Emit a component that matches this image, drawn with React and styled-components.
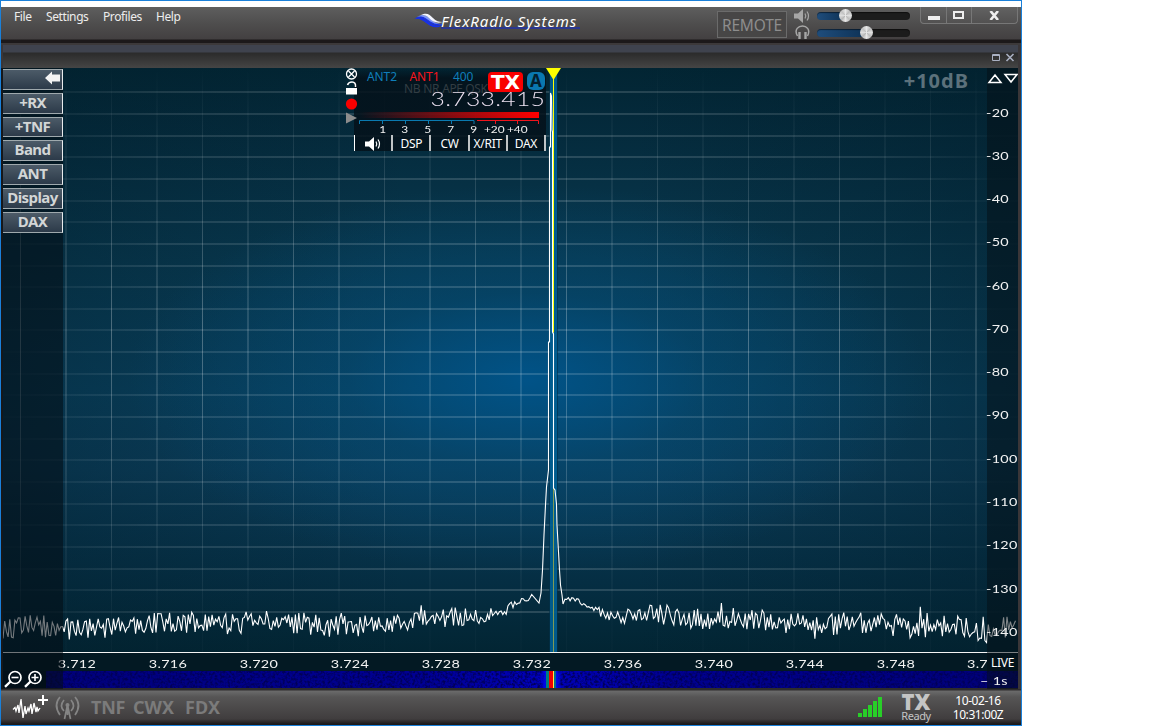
import styled, { createGlobalStyle } from "styled-components";

const GlobalStyle = createGlobalStyle`
  * {
    box-sizing: border-box;
  }
  body {
    margin: 0;
    background: #fff;
    font-family: "Noto Sans", "Open Sans", sans-serif;
  }
`;

const Window = styled.div`
  width: 1022px;
  height: 726px;
  border: 1px solid #1a80d9;
  padding-top: 6px;
  display: flex;
  flex-direction: column;
  overflow: hidden;
`;

/* ---------- title bar ---------- */

const TitleBar = styled.header`
  flex: none;
  display: flex;
  align-items: flex-start;
  height: 38px;
  background: linear-gradient(#5e5e5e, #4e4d4d 45%, #434041 32px, #1c191a 33px, #1c191a 36px, #3c393a 36px);
`;

const Menu = styled.nav`
  display: flex;
  width: 413px;
  padding: 2px 0 0 13px;
  gap: 14px;
`;

const MenuItem = styled.span`
  width: ${(p) => p.$width}px;
  color: #ededed;
  font-size: 12px;
  line-height: 16px;
  letter-spacing: -0.4px;
  white-space: nowrap;
`;

const Brand = styled.div`
  display: flex;
  width: 303px;
  padding-top: 5px;
`;

const BrandName = styled.span`
  margin-left: -5px;
  height: 18px;
  width: 140px;
  color: #fff;
  font-size: 15px;
  font-style: italic;
  line-height: 18px;
  letter-spacing: 0.9px;
  white-space: nowrap;
  background: linear-gradient(#2b3790, #2b3790) 0 15px / 139px 2px no-repeat;
`;

const Remote = styled.button`
  width: 70px;
  height: 27px;
  margin-top: 4px;
  padding: 0;
  border: 1px solid #6b6b6b;
  background: #474646;
  color: #8d8d8d;
  font: 15.5px/26px "Noto Sans", sans-serif;
  letter-spacing: -0.2px;
`;

const Volumes = styled.div`
  display: flex;
  flex-direction: column;
  width: 133px;
  padding-left: 7px;
`;

const VolumeRow = styled.div`
  display: flex;
  align-items: center;
  height: 17px;
  gap: 6px;
`;

const Track = styled.div`
  display: flex;
  align-items: center;
  width: 93px;
  height: 8px;
  border-radius: 4px;
  background: linear-gradient(90deg, #1f4d7c, #0d3155 ${(p) => p.$value}px, #1c1c1c ${(p) => p.$value}px);
  box-shadow: inset 0 1px 1px rgba(0, 0, 0, 0.5);
`;

const Knob = styled.span`
  width: 13px;
  height: 13px;
  margin-left: ${(p) => p.$value - 6}px;
  border-radius: 50%;
  background: conic-gradient(#e8e8e8, #bbb, #e0e0e0, #bdbdbd, #e8e8e8, #b8b8b8, #dedede, #c2c2c2, #e8e8e8);
`;

const WindowButtons = styled.div`
  display: flex;
  height: 17px;
  border: 1px solid #777;
  border-top: 0;
  border-radius: 0 0 4px 4px;
  background: linear-gradient(#626262, #525151);
`;

const WindowButton = styled.button`
  display: flex;
  align-items: center;
  justify-content: center;
  width: ${(p) => p.$width}px;
  padding: 0;
  border: 0;
  border-right: ${(p) => (p.$last ? "0" : "1px solid #777")};
  background: none;
`;

/* ---------- panadapter ---------- */

const PanHeader = styled.div`
  flex: none;
  display: flex;
  justify-content: flex-end;
  height: 23px;
  padding: 8px 3px 0 0;
  border: 0 solid #3a3638;
  border-width: 0 3px 0 2px;
  background: linear-gradient(#3f434e 0 7px, #2b2b2b 8px, #454545);
`;

const Pan = styled.main`
  position: relative;
  flex: none;
  display: flex;
  flex-direction: column;
  width: 1020px;
  height: 621px;
  border-left: 2px solid #15171a;
  border-right: 3px solid #3a3638;
`;

const Spectrum = styled.svg`
  display: block;
  flex: none;
  width: 1015px;
  height: 584px;
  background:
    radial-gradient(ellipse 400px 195px at 525px 312px, rgba(0, 84, 138, 0.95), rgba(2, 76, 120, 0.45) 45%, rgba(4, 66, 98, 0)),
    linear-gradient(90deg, rgba(2, 30, 43, 0.4), rgba(2, 30, 43, 0) 40%, rgba(2, 30, 43, 0) 62%, rgba(2, 30, 43, 0.45)),
    linear-gradient(#022533, #04293a 8%, #08384f 33%, #09415f 55%, #0b3d5a 69%, #052e43 88%, #022533);
`;

const FrequencyBand = styled.div`
  flex: none;
  height: 19px;
  border-top: 1px solid #f4f4f4;
  background: #031923;
`;

const FrequencyAxis = styled.div`
  display: flex;
  width: 984px;
  height: 18px;
  padding-left: 28px;
  overflow: hidden;
`;

const Numerals = styled.span`
  display: inline-block;
  color: #f2f2f2;
  font-family: Lato, sans-serif;
  font-weight: 400;
  font-size: 12px;
  line-height: 18px;
  letter-spacing: 0.25px;
  transform: scaleX(1.2);
  transform-origin: ${(p) => p.$origin || "center"};
  white-space: nowrap;
`;

const FrequencyLabel = styled.span`
  flex: none;
  display: flex;
  justify-content: ${(p) => (p.$cut ? "flex-start" : "center")};
  width: 91px;
  height: 18px;
  padding-left: ${(p) => (p.$cut ? "26px" : "0")};
  line-height: 18px;

  ${Numerals} {
    height: 18px;
    line-height: 22px;
  }
`;

const Waterfall = styled.svg`
  display: block;
  flex: none;
  width: 1015px;
  height: 18px;
`;

const SidePanel = styled.aside`
  position: absolute;
  top: 0;
  left: 0;
  display: flex;
  flex-direction: column;
  gap: 3px;
  width: 60px;
  height: 621px;
  padding: 1px 0 0;
  background: rgba(3, 13, 20, 0.55);
`;

const SideButton = styled.button`
  display: flex;
  align-items: center;
  justify-content: ${(p) => (p.$end ? "flex-end" : "center")};
  height: 20.83px;
  padding: 0 ${(p) => (p.$end ? 1 : 0)}px 2px 0;
  border: 1px solid #9fa9ad;
  border-left: 0;
  border-right-color: #e8eaec;
  background: linear-gradient(#4c5b68, #2c3a49);
  color: #d3d6d6;
  font: bold 15px/17px "Noto Sans", sans-serif;
  letter-spacing: -0.6px;
`;

const ZoomTools = styled.div`
  display: flex;
  gap: 1px;
  margin-top: auto;
  padding: 0 0 1px 1px;
`;

const LevelScale = styled.aside`
  position: absolute;
  top: 0;
  right: 0;
  display: flex;
  flex-direction: column;
  width: 31px;
  height: 621px;
  background: rgba(3, 13, 20, 0.5);
`;

const LevelArrows = styled.div`
  display: flex;
  height: 23px;
`;

const LevelLabel = styled.div`
  display: flex;
  align-items: center;
  flex: none;
  height: 43.27px;
  margin-left: -1px;
`;

const Live = styled.span`
  margin-top: auto;
  padding: 0 0 2px 4px;
  color: #fff;
  font-size: 12px;
  line-height: 15px;
  letter-spacing: -0.3px;
`;

const TimeStep = styled.div`
  display: flex;
  height: 17px;
  margin-left: -7px;

  ${Numerals} {
    line-height: 17px;
  }
`;

const Gain = styled.span`
  position: absolute;
  top: 1px;
  right: 49px;
  color: #5c717b;
  font: bold 20px/23px "Noto Sans", sans-serif;
  letter-spacing: 1px;
`;

/* ---------- slice flag ---------- */

const Flag = styled.section`
  position: absolute;
  top: 0;
  left: 341px;
  display: flex;
  width: 204px;
`;

const FlagIcons = styled.svg`
  flex: none;
  width: 14px;
  height: 60px;
  margin-right: -4px;
  z-index: 1;
`;

const FlagBody = styled.div`
  width: 192px;
  height: 83px;
  background: linear-gradient(rgba(4, 17, 26, 0), rgba(4, 17, 26, 0.85) 10px);
`;

const FlagTop = styled.div`
  display: flex;
  height: 20px;
  padding: 1px 0 0 13px;
`;

const Antenna = styled.span`
  width: ${(p) => p.$width}px;
  color: ${(p) => p.$color};
  font-size: 12px;
  line-height: 16px;
  letter-spacing: -0.1px;
`;

const TxBadge = styled.span`
  width: 35px;
  height: 20px;
  margin: 3px 4px 0 0;
  border-radius: 4px;
  background: #f90000;
  color: #fff;
  text-align: center;
  font: bold 20px/20px "DejaVu Sans", sans-serif;
  z-index: 1;
`;

const SliceBadge = styled.span`
  width: 18px;
  height: 18px;
  margin-top: 3px;
  border-radius: 6px;
  background: #0a78b0;
  color: #03202f;
  text-align: center;
  font: bold 17px/18px "Noto Sans", sans-serif;
`;

const DspFlags = styled.div`
  display: flex;
  gap: 3px;
  height: 0;
  padding-left: 50px;
  color: #323d43;
  font-size: 12px;
  line-height: 1px;
  letter-spacing: -0.35px;
`;

const Frequency = styled.div`
  display: flex;
  justify-content: flex-end;
  height: 24px;
  padding-right: 1px;

  ${Numerals} {
    color: #eee2f2;
    font-weight: 300;
    font-size: 19px;
    line-height: 22px;
    transform: scaleX(1.3);
  }
`;

const MeterBar = styled.div`
  width: 180px;
  height: 6px;
  margin-left: 5px;
  background: linear-gradient(90deg, rgba(255, 0, 0, 0), #f00);
`;

const MeterTicks = styled.svg`
  display: block;
  width: 192px;
  height: 7px;
`;

const MeterLabels = styled.div`
  display: flex;
  height: 10px;
  padding-left: 17px;
`;

const MeterLabel = styled.span`
  flex: none;
  display: flex;
  justify-content: center;
  width: ${(p) => p.$width}px;

  ${Numerals} {
    font-size: 9.5px;
    line-height: 10px;
    letter-spacing: 0;
    transform: scaleX(1.25);
  }
`;

const FlagTabs = styled.div`
  display: flex;
  width: 192px;
  height: 16px;
  border-left: 1px solid #fff;
`;

const FlagTab = styled.button`
  flex: 1;
  display: flex;
  align-items: center;
  justify-content: center;
  padding: 1px 0 0;
  border: 0;
  border-right: 2px solid #c0c4c6;
  background: none;
  color: #fff;
  font: 12px/16px "Noto Sans", sans-serif;
  letter-spacing: -0.3px;
  white-space: nowrap;
`;

/* ---------- status bar ---------- */

const StatusBar = styled.footer`
  flex: 1;
  display: flex;
  padding-top: 2px;
  background: linear-gradient(#2d2b2c 1px, #6b6b6b 2px, #565555 8px, #403d3e 30px, #1c1a1b 35px);
`;

const Toggle = styled.span`
  width: ${(p) => p.$width}px;
  color: #7b7b7b;
  font: bold 18px/32px "Noto Sans", sans-serif;
  letter-spacing: ${(p) => p.$track || 0}px;
`;

const SignalBars = styled.div`
  display: flex;
  align-items: flex-end;
  gap: 1px;
  height: 26px;
  margin-left: auto;
`;

const SignalBar = styled.span`
  width: 4px;
  height: ${(p) => p.$height}px;
  background: #28cf28;
`;

const TxState = styled.div`
  display: flex;
  flex-direction: column;
  align-items: center;
  width: 32px;
  margin-left: 18px;
  color: #c4c4c4;
`;

const TxTitle = styled.strong`
  font: 800 22px/20px "Open Sans", sans-serif;
`;

const TxText = styled.span`
  font-size: 11px;
  line-height: 10px;
  letter-spacing: -0.4px;
`;

const Clock = styled.div`
  width: 58px;
  margin: 3px 14px 0 17px;
  color: #fff;
  text-align: center;
  font-size: 12px;
  line-height: 13.5px;
  letter-spacing: -0.45px;
  white-space: nowrap;
`;

const frequencies = ["3.712", "3.716", "3.720", "3.724", "3.728", "3.732", "3.736", "3.740", "3.744", "3.748", "3.7"];
const levels = [-20, -30, -40, -50, -60, -70, -80, -90, -100, -110, -120, -130, -140];

const sideItems = ["+RX", "+TNF", "Band", "ANT", "Display", "DAX"];

// average noise floor: [x, y]
const floor = [
  [0, 563], [20, 557], [60, 560], [90, 562], [118, 560], [130, 556], [180, 553], [205, 558], [260, 553],
  [300, 555], [325, 559], [350, 556], [400, 552], [450, 550], [480, 548], [500, 542], [512, 535], [530, 530],
];
const floorRight = [
  [562, 530], [575, 533], [590, 541], [605, 547], [640, 549], [660, 546], [690, 553], [750, 550], [790, 556],
  [820, 557], [860, 554], [900, 558], [950, 558], [984, 564], [1014, 556],
];

function lerp(points, x) {
  const i = Math.max(1, points.findIndex((p) => p[0] >= x));
  const [x0, y0] = points[i - 1];
  const [x1, y1] = points[i];
  return y0 + ((y1 - y0) * (x - x0)) / (x1 - x0);
}

function noise(points, from, to, seed) {
  let s = seed;
  const rand = () => {
    s = (s * 16807) % 2147483647;
    return s / 2147483647;
  };
  const out = [];
  let flip = 1;
  for (let x = from; x <= to; x += 1.7) {
    const calm = Math.min(1, Math.abs(x - 549) / 90);
    const spike = rand() > 0.94 ? 1.8 : 1;
    const y = lerp(points, x) + flip * rand() * (2 + 9 * calm * calm) * spike;
    out.push(`${x.toFixed(1)},${y.toFixed(1)}`);
    flip = rand() > 0.35 ? -flip : flip;
  }
  return out.join(" ");
}

const peak =
  "536,535 538,525 539.5,502 541,467 542.5,437 543.5,419 545.5,402 545.5,274 546.5,274 546.5,79 547.5,79 547.5,25 548.5,28 549,62 549.5,64 549.5,264 550.5,266 550.5,420 552,422 553.5,436 554,457 555.5,484 556.5,502 557.5,517 559,527 560,536";

const trace = `${noise(floor, 0, 530, 4711)} ${peak} ${noise(floorRight, 562, 1014, 977)}`;

function SpectrumView() {
  const columns = Array.from({ length: 22 }, (_, i) => 17.5 + 45.5 * i);
  const rows = Array.from({ length: 25 }, (_, i) => 24.3 + 21.65 * i);
  return (
    <Spectrum viewBox="0 0 1015 584">
      <defs>
        <linearGradient id="fadeY" gradientUnits="userSpaceOnUse" x1="0" y1="0" x2="0" y2="584">
          <stop offset="0" stopColor="#fff" stopOpacity="0" />
          <stop offset="0.2" stopColor="#fff" stopOpacity="0.13" />
          <stop offset="0.45" stopColor="#fff" stopOpacity="0.28" />
          <stop offset="0.7" stopColor="#fff" stopOpacity="0.18" />
          <stop offset="0.95" stopColor="#fff" stopOpacity="0.02" />
        </linearGradient>
        <linearGradient id="fadeX" gradientUnits="userSpaceOnUse" x1="0" y1="0" x2="1015" y2="0">
          <stop offset="0" stopColor="#fff" stopOpacity="0.02" />
          <stop offset="0.15" stopColor="#fff" stopOpacity="0.15" />
          <stop offset="0.5" stopColor="#fff" stopOpacity="0.22" />
          <stop offset="0.85" stopColor="#fff" stopOpacity="0.15" />
          <stop offset="0.98" stopColor="#fff" stopOpacity="0.02" />
        </linearGradient>
      </defs>
      {columns.map((x) => (
        <rect key={x} x={x - 0.5} width="1" height="584" fill="url(#fadeY)" />
      ))}
      {rows.map((y) => (
        <rect key={y} y={Math.round(y) - 0.7} width="1015" height="1.4" fill="url(#fadeX)" />
      ))}
      <rect x="546" width="9" height="584" fill="#01304a" opacity="0.6" />
      <rect x="547" width="7" height="584" fill="#00659c" opacity="0.8" />
      <rect x="550" y="8" width="1" height="576" fill="#7f9b55" />
      <rect x="550" y="8" width="1" height="256" fill="#ff0" />
      <polyline points={trace} fill="none" stroke="#fff" strokeWidth="1.1" />
      <path d="M543 0H558L550.5 12Z" fill="#ff0" />
    </Spectrum>
  );
}

function WaterfallView() {
  return (
    <Waterfall viewBox="0 0 1015 18">
      <defs>
        <linearGradient id="water">
          <stop offset="0" stopColor="#000078" />
          <stop offset="0.42" stopColor="#000094" />
          <stop offset="0.53" stopColor="#0000ba" />
          <stop offset="0.58" stopColor="#0000ae" />
          <stop offset="0.66" stopColor="#000090" />
          <stop offset="1" stopColor="#000078" />
        </linearGradient>
        <linearGradient id="carrier">
          <stop offset="0" stopColor="#0000f0" stopOpacity="0.2" />
          <stop offset="0.3" stopColor="#0010ff" />
          <stop offset="0.7" stopColor="#0010ff" />
          <stop offset="1" stopColor="#0000f0" stopOpacity="0.2" />
        </linearGradient>
        <filter id="grain" x="0" y="0" width="100%" height="100%">
          <feTurbulence type="fractalNoise" baseFrequency="0.4" numOctaves="2" seed="3" />
          <feColorMatrix values="0 0 0 0 0  0 0 0 0 0  0 0 0 0 0.1  3 0 0 0 -1.2" />
        </filter>
      </defs>
      <rect width="1015" height="18" fill="url(#water)" />
      <rect width="1015" height="18" filter="url(#grain)" />
      <rect x="538" width="20" height="18" fill="url(#carrier)" />
      <rect x="543" width="3" height="18" fill="#008080" />
      <rect x="546" width="4" height="18" fill="#f00000" />
      <rect x="550" width="1" height="18" fill="#ffe640" />
      <rect x="551" width="2" height="18" fill="#00688c" />
      <rect width="43" height="18" fill="#02131f" />
      <rect y="17" width="1015" height="1" fill="#2d2b2c" />
    </Waterfall>
  );
}

function SpeakerIcon({ color }) {
  return (
    <svg width="17" height="14" viewBox="0 0 17 14" fill="none" stroke={color}>
      <path d="M0 4.5H4L9 0V14L4 9.5H0Z" fill={color} stroke="none" />
      <path d="M11 4.5Q12.6 7 11 9.5M13 2.5Q16 7 13 11.5" strokeWidth="1.2" />
    </svg>
  );
}

function HeadphonesIcon() {
  return (
    <svg width="17" height="15" viewBox="0 0 17 15" fill="none" stroke="#a6a6a6">
      <path d="M3.5 11C-0.5 4 5 1 8.5 1S17 4 13.5 11" strokeWidth="1.5" />
      <path d="M5.5 7V14M11.5 7V14" strokeWidth="2.4" />
    </svg>
  );
}

function BrandMark() {
  return (
    <svg width="32" height="16" viewBox="0 0 32 16" fill="none">
      <path d="M0 7C7 2 11 7 15 10C19 14 24 14 29 13C22 18 16 14 12 11C8 8 5 6 0 7Z" fill="#1731e6" />
      <path d="M3 5C10 0 14 5 18 8C21 11 25 12 29 12C21 14 17 11 13 8C10 5 7 4 3 5Z" fill="#7d96f5" />
      <path d="M7 3C13 0 16 3 19 6C22 9 25 10 29 10C22 12 18 9 15 6C12 3 10 3 7 3Z" fill="#f4f6ff" />
      <path d="M2 6.5C9 3 12 7 16 10C20 13 25 13 29 12.5" stroke="#1731e6" strokeWidth="1.2" />
    </svg>
  );
}

function ZoomIcon({ plus }) {
  return (
    <svg width="19" height="18" viewBox="0 0 19 18" fill="none" stroke="#fff">
      <circle cx="11" cy="7.5" r="6" strokeWidth="1.7" />
      <path d="M6.5 11.5L1 16.8" strokeWidth="2.4" />
      <path d={plus ? "M7.5 7.5H14.5M11 4V11" : "M7.5 7.5H14.5"} strokeWidth="1.6" />
    </svg>
  );
}

function SliceFlag() {
  return (
    <Flag>
      <FlagIcons viewBox="0 0 14 60" fill="none" stroke="#fff">
        <circle cx="7.5" cy="6" r="5" strokeWidth="1.3" />
        <path d="M4.5 3L10.5 9M10.5 3L4.5 9" strokeWidth="1.3" />
        <path d="M3.5 17Q4.5 14 8 14Q12 14 11.5 19" strokeWidth="1.5" />
        <rect x="2" y="20" width="11" height="6.5" fill="#fff" stroke="none" />
        <circle cx="7.5" cy="36" r="5.6" fill="#f90000" stroke="none" />
        <path d="M2 44.5L13 50L2 55.5Z" fill="#8c8c8c" stroke="none" />
      </FlagIcons>
      <FlagBody>
        <FlagTop>
          <Antenna $width={42.5} $color="#0f7fba">ANT2</Antenna>
          <Antenna $width={43.5} $color="#f8141c">ANT1</Antenna>
          <Antenna $width={35} $color="#0f7fba">400</Antenna>
          <TxBadge>TX</TxBadge>
          <SliceBadge>A</SliceBadge>
        </FlagTop>
        <DspFlags>
          <span>NB</span>
          <span>NR</span>
          <span>APF</span>
          <span>QSK</span>
        </DspFlags>
        <Frequency>
          <Numerals $origin="right">3.733.415</Numerals>
        </Frequency>
        <MeterBar />
        <MeterTicks viewBox="0 0 192 7" fill="none">
          <path d="M5.5 6V2.5H120V6M28.5 3V6M51.5 3V6M74.5 3V6M97.5 3V6" stroke="#0a7ab0" />
          <path d="M123 2.5H184.5V6M141.5 3V6M163.5 3V6" stroke="#f0141c" />
        </MeterTicks>
        <MeterLabels>
          {["1", "3", "5", "7", "9"].map((n) => (
            <MeterLabel key={n} $width={22.8}>
              <Numerals>{n}</Numerals>
            </MeterLabel>
          ))}
          <MeterLabel $width={18}>
            <Numerals>+20</Numerals>
          </MeterLabel>
          <MeterLabel $width={28}>
            <Numerals>+40</Numerals>
          </MeterLabel>
        </MeterLabels>
        <FlagTabs>
          <FlagTab>
            <SpeakerIcon color="#fff" />
          </FlagTab>
          <FlagTab>DSP</FlagTab>
          <FlagTab>CW</FlagTab>
          <FlagTab>X/RIT</FlagTab>
          <FlagTab>DAX</FlagTab>
        </FlagTabs>
      </FlagBody>
    </Flag>
  );
}

function Header() {
  return (
    <TitleBar>
      <Menu>
        <MenuItem $width={18}>File</MenuItem>
        <MenuItem $width={43}>Settings</MenuItem>
        <MenuItem $width={39}>Profiles</MenuItem>
        <MenuItem $width={26}>Help</MenuItem>
      </Menu>
      <Brand>
        <BrandMark />
        <BrandName>FlexRadio Systems</BrandName>
      </Brand>
      <Remote>REMOTE</Remote>
      <Volumes>
        <VolumeRow>
          <SpeakerIcon color="#a6a6a6" />
          <Track $value={28}>
            <Knob $value={28} />
          </Track>
        </VolumeRow>
        <VolumeRow>
          <HeadphonesIcon />
          <Track $value={49}>
            <Knob $value={49} />
          </Track>
        </VolumeRow>
      </Volumes>
      <WindowButtons>
        <WindowButton $width={26}>
          <svg width="12" height="12">
            <rect y="7" width="12" height="4" fill="#eee" />
          </svg>
        </WindowButton>
        <WindowButton $width={25}>
          <svg width="12" height="10">
            <rect x="1" y="2" width="9" height="6" fill="none" stroke="#eee" strokeWidth="2" />
          </svg>
        </WindowButton>
        <WindowButton $width={45} $last>
          <svg width="11" height="9" stroke="#eee" strokeWidth="2.6">
            <path d="M1.5 0L9 9M9 0L1.5 9" />
          </svg>
        </WindowButton>
      </WindowButtons>
    </TitleBar>
  );
}

function Status() {
  return (
    <StatusBar>
      <svg width="90" height="34" fill="none">
        <path
          d="M12 18.5L14 16.5L15 20L17 14L18 22L20 8L22 27L24 15L25 23L27 17L28 20L30 13L31 23L33 12L35 21L36 16L37 20L39 17"
          stroke="#fff"
          strokeWidth="1.3"
        />
        <path d="M37 9H47M42 4V14" stroke="#fff" strokeWidth="2" />
        <g stroke="#858585" strokeWidth="1.7">
          <path d="M59 6Q52 14 59 24M63 9Q58 15 63 20M74 6Q81 14 74 24M70 9Q75 15 70 20" />
          <circle cx="66.5" cy="14" r="2" fill="#858585" stroke="none" />
          <path d="M66.5 14L63.5 28M66.5 14L69.5 28M66.5 16V24" />
        </g>
      </svg>
      <Toggle $width={42} $track={-0.2}>TNF</Toggle>
      <Toggle $width={52}>CWX</Toggle>
      <Toggle $width={40} $track={0.1}>FDX</Toggle>
      <SignalBars>
        {[4, 8, 12, 16, 20].map((h) => (
          <SignalBar key={h} $height={h} />
        ))}
      </SignalBars>
      <TxState>
        <TxTitle>TX</TxTitle>
        <TxText>Ready</TxText>
      </TxState>
      <Clock>
        <div>10-02-16</div>
        <div>10:31:00Z</div>
      </Clock>
    </StatusBar>
  );
}

function App() {
  return (
    <>
      <GlobalStyle />
      <Window>
        <Header />
        <PanHeader>
          <svg width="24" height="10" fill="none" stroke="#a9b0c2">
            <path d="M1.5 1.5H8.5V7.5H1.5ZM1 2.5H9" />
            <path d="M15.5 1L22.5 8M22.5 1L15.5 8" strokeWidth="1.6" />
          </svg>
        </PanHeader>
        <Pan>
          <SpectrumView />
          <FrequencyBand>
            <FrequencyAxis>
              {frequencies.map((f) => (
                <FrequencyLabel key={f} $cut={f.length < 5}>
                  <Numerals $origin={f.length < 5 ? "left" : "center"}>{f}</Numerals>
                </FrequencyLabel>
              ))}
            </FrequencyAxis>
          </FrequencyBand>
          <WaterfallView />
          <Gain>+10dB</Gain>
          <SliceFlag />
          <SidePanel>
            <SideButton $end>
              <svg width="16" height="14" fill="#f4f4f4">
                <path d="M0 7L7 0.5V3.5H15V10.5H7V13.5Z" />
              </svg>
            </SideButton>
            {sideItems.map((item) => (
              <SideButton key={item}>{item}</SideButton>
            ))}
            <ZoomTools>
              <ZoomIcon />
              <ZoomIcon plus />
            </ZoomTools>
          </SidePanel>
          <LevelScale>
            <LevelArrows>
              <svg width="31" height="22" fill="none" stroke="#fff" strokeWidth="1.5">
                <path d="M2 14.5L8 7L14 14.5ZM18 6.5H30L24 14Z" />
              </svg>
            </LevelArrows>
            {levels.map((l) => (
              <LevelLabel key={l}>
                <Numerals $origin="left">{l}</Numerals>
              </LevelLabel>
            ))}
            <Live>LIVE</Live>
            <TimeStep>
              <Numerals $origin="left">– 1s</Numerals>
            </TimeStep>
          </LevelScale>
        </Pan>
        <Status />
      </Window>
    </>
  );
}

export default App;
